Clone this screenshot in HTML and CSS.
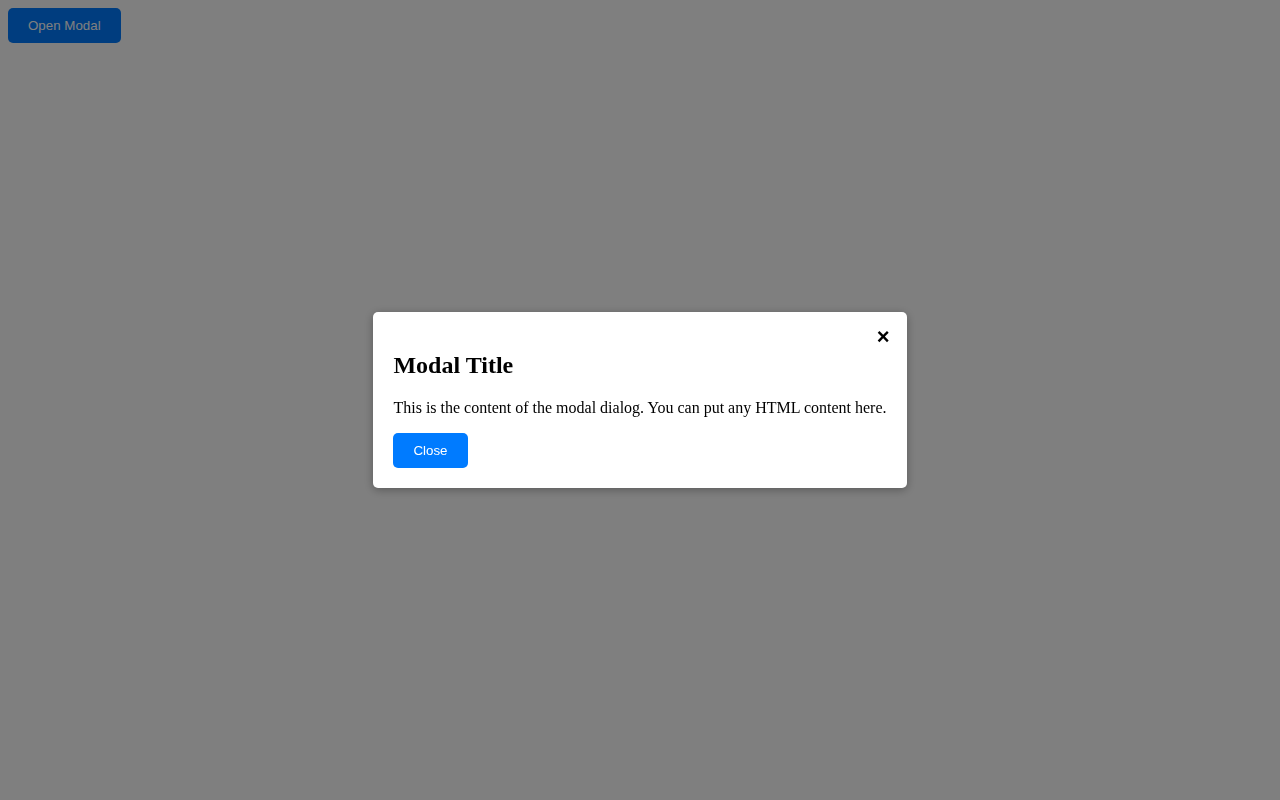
FILE: index.html
```html
<!DOCTYPE html>
<html>
<head>
<meta charset="utf-8">
<title>Modal</title>
<link rel="stylesheet" href="styles.css">
</head>
<body>
<button class="open-btn">Open Modal</button>
<div class="overlay">
  <div class="modal">
    <span class="close">&times;</span>
    <h2 class="modal-title">Modal Title</h2>
    <p class="modal-text">This is the content of the modal dialog. You can put any HTML content here.</p>
    <button class="btn">Close</button>
  </div>
</div>
</body>
</html>
```
FILE: styles.css
```css
html, body {
  height: 100%;
}
body {
  margin: 8px;
  background: #ffffff;
  font-family: "Liberation Serif", "Times New Roman", serif;
  color: #000;
}
.open-btn, .btn {
  background: #007bff;
  color: #ffffff;
  border: none;
  border-radius: 5px;
  padding: 10px 20px;
  font-family: "Liberation Sans", Arial, sans-serif;
  font-size: 13.333px;
  line-height: normal;
  cursor: pointer;
}
.overlay {
  position: fixed;
  inset: 0;
  background: rgba(0, 0, 0, 0.5);
  display: flex;
  align-items: center;
  justify-content: center;
}
.modal {
  position: relative;
  background: #ffffff;
  padding: 20px;
  border-radius: 5px;
  box-shadow: 0 2px 10px rgba(0, 0, 0, 0.3);
}
.close {
  position: absolute;
  top: 12px;
  right: 17px;
  font-family: "Liberation Sans", Arial, sans-serif;
  font-size: 22px;
  font-weight: bold;
  cursor: pointer;
}
.modal-title {
  font-size: 24px;
  margin: 0.83em 0;
}
.modal-text {
  font-size: 16px;
  margin: 16px 0;
}
```
